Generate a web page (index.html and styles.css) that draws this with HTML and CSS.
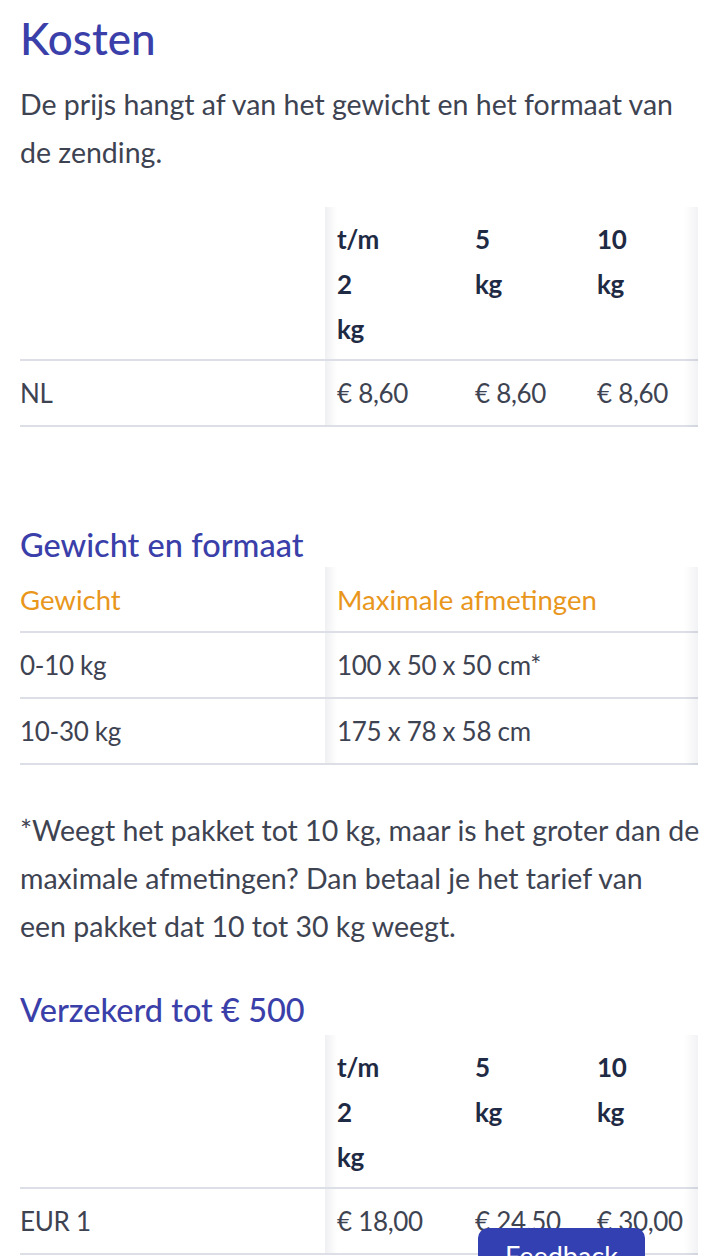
FILE: index.html
```html
<!DOCTYPE html>
<html lang="nl">
<head>
<meta charset="utf-8">
<title>Kosten</title>
<link rel="stylesheet" href="styles.css">
</head>
<body>
<main class="page">
  <h1 class="title">Kosten</h1>
  <p class="intro">De prijs hangt af van het gewicht en het formaat van de zending.</p>

  <div class="table-wrap table-wrap--first">
    <table class="rates">
      <colgroup><col class="c1"><col class="c2"><col class="c3"><col class="c4"></colgroup>
      <thead>
        <tr>
          <th class="rowhead"></th>
          <th class="col-first"><span class="stack">t/m 2 kg</span></th>
          <th><span class="stack">5 kg</span></th>
          <th><span class="stack">10 kg</span></th>
        </tr>
      </thead>
      <tbody>
        <tr>
          <td class="rowhead">NL</td>
          <td class="col-first">€ 8,60</td>
          <td>€ 8,60</td>
          <td>€ 8,60</td>
        </tr>
      </tbody>
    </table>
  </div>

  <h2 class="subtitle subtitle--gap">Gewicht en formaat</h2>
  <div class="table-wrap table-wrap--tight">
    <table class="sizes">
      <colgroup><col class="c1"><col class="c2w"></colgroup>
      <thead>
        <tr>
          <th class="rowhead orange">Gewicht</th>
          <th class="col-first orange">Maximale afmetingen</th>
        </tr>
      </thead>
      <tbody>
        <tr>
          <td class="rowhead">0-10 kg</td>
          <td class="col-first">100 x 50 x 50 cm*</td>
        </tr>
        <tr>
          <td class="rowhead">10-30 kg</td>
          <td class="col-first">175 x 78 x 58 cm</td>
        </tr>
      </tbody>
    </table>
  </div>

  <p class="note">*Weegt het pakket tot 10 kg, maar is het groter dan de maximale afmetingen? Dan betaal je het tarief van een&nbsp;pakket dat 10 tot 30 kg weegt.</p>

  <h2 class="subtitle subtitle--near">Verzekerd tot € 500</h2>
  <div class="table-wrap table-wrap--ins">
    <table class="rates">
      <colgroup><col class="c1"><col class="c2"><col class="c3"><col class="c4"></colgroup>
      <thead>
        <tr>
          <th class="rowhead"></th>
          <th class="col-first"><span class="stack">t/m 2 kg</span></th>
          <th><span class="stack">5 kg</span></th>
          <th><span class="stack">10 kg</span></th>
        </tr>
      </thead>
      <tbody>
        <tr>
          <td class="rowhead">EUR 1</td>
          <td class="col-first">€ 18,00</td>
          <td>€ 24,50</td>
          <td>€ 30,00</td>
        </tr>
      </tbody>
    </table>
  </div>
</main>
<button class="feedback" type="button">Feedback</button>
</body>
</html>
```
FILE: styles.css
```css
* { box-sizing: border-box; }

html, body {
  margin: 0;
  padding: 0;
  background: #ffffff;
}

body {
  font-family: "Lato", "Open Sans", sans-serif;
  color: #3e4352;
  overflow: hidden;
}

.page {
  padding: 10px 6px 0 20px;
}

.title {
  margin: 0;
  font-size: 44px;
  line-height: 56px;
  font-weight: 500;
  color: #3a3fa9;
}

.intro {
  margin: 14px 0 0;
  font-size: 28.5px;
  line-height: 48px;
}

.subtitle {
  margin: 0;
  font-size: 32.5px;
  line-height: 40px;
  font-weight: 500;
  color: #3a3fa9;
}
.subtitle--gap { margin-top: 98px; }
.subtitle--near { margin-top: 40px; }

.table-wrap {
  position: relative;
  width: 678px;
}
.table-wrap::after {
  content: "";
  position: absolute;
  top: 0;
  right: 0;
  bottom: 0;
  width: 14px;
  background: linear-gradient(to right, rgba(30, 40, 70, 0), rgba(30, 40, 70, 0.06));
  pointer-events: none;
}
.table-wrap--first { margin-top: 31px; }
.table-wrap--tight { margin-top: 2px; }
.table-wrap--ins { margin-top: 5px; }

table {
  width: 678px;
  border-collapse: collapse;
  table-layout: fixed;
  font-size: 26px;
  line-height: 45px;
}

col.c1 { width: 305px; }
col.c2 { width: 138px; }
col.c3 { width: 122px; }
col.c4 { width: 113px; }
col.c2w { width: 373px; }

th, td {
  text-align: left;
  vertical-align: top;
  padding: 10px 4px 9px 12px;
  border-bottom: 2px solid #dcdfe6;
  letter-spacing: -0.3px;
}

.rowhead {
  padding-left: 0;
}

.col-first {
  background: linear-gradient(to right, rgba(30, 40, 70, 0.07), rgba(30, 40, 70, 0) 12px);
}

.rates th {
  font-weight: 700;
  color: #1f2a44;
  padding-bottom: 7px;
}

.stack {
  display: inline-block;
  width: min-content;
}

.sizes th {
  font-weight: 400;
  font-size: 27.5px;
  letter-spacing: 0;
}

.orange {
  color: #e8961c;
}

.note {
  margin: 41px 0 0;
  font-size: 28.5px;
  line-height: 48px;
}

.feedback {
  position: fixed;
  left: 478px;
  bottom: -28px;
  width: 167px;
  height: 56px;
  border: 0;
  border-radius: 10px 10px 0 0;
  background: #3340b2;
  color: #ffffff;
  font-family: "Lato", "Open Sans", sans-serif;
  font-size: 27px;
  line-height: 52px;
  padding: 0;
}
```
